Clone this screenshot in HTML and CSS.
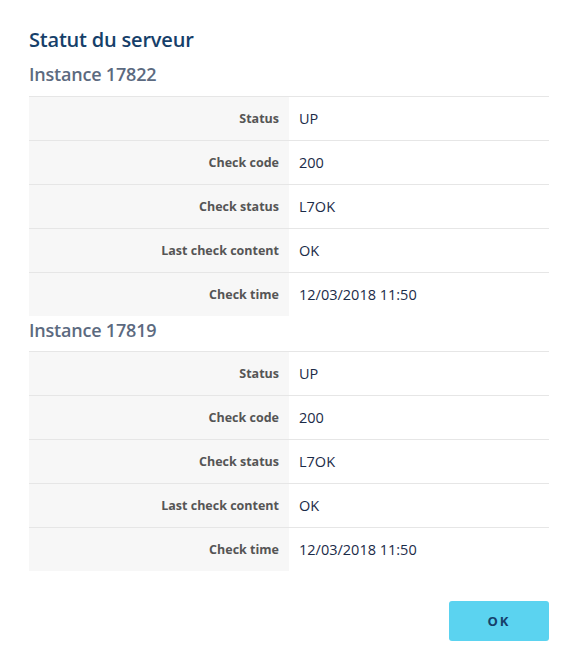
FILE: index.html
```html
<!DOCTYPE html>
<html lang="fr">
<head>
<meta charset="utf-8">
<link rel="stylesheet" href="styles.css">
</head>
<body>
<div class="dialog">
  <h1 class="title">Statut du serveur</h1>
  <section class="instance">
    <h2 class="instance-title">Instance 17822</h2>
    <table class="info">
      <tr><th>Status</th><td>UP</td></tr>
      <tr><th>Check code</th><td>200</td></tr>
      <tr><th>Check status</th><td>L7OK</td></tr>
      <tr><th>Last check content</th><td>OK</td></tr>
      <tr><th>Check time</th><td>12/03/2018 11:50</td></tr>
    </table>
  </section>
  <section class="instance">
    <h2 class="instance-title">Instance 17819</h2>
    <table class="info">
      <tr><th>Status</th><td>UP</td></tr>
      <tr><th>Check code</th><td>200</td></tr>
      <tr><th>Check status</th><td>L7OK</td></tr>
      <tr><th>Last check content</th><td>OK</td></tr>
      <tr><th>Check time</th><td>12/03/2018 11:50</td></tr>
    </table>
  </section>
  <div class="actions">
    <button class="btn-ok">OK</button>
  </div>
</div>
</body>
</html>
```
FILE: styles.css
```css
html, body {
  margin: 0;
  padding: 0;
  background: #fff;
}
.dialog {
  padding: 26px 29px 16px;
  font-family: "Open Sans", "Noto Sans", sans-serif;
}
.title {
  margin: 0;
  font-size: 20px;
  line-height: 28px;
  font-weight: 600;
  color: #163f6a;
  letter-spacing: -0.2px;
}
.instance-title {
  margin: 0;
  padding-top: 6px;
  font-size: 18px;
  line-height: 28px;
  font-weight: 600;
  color: #5c6a80;
  letter-spacing: -0.2px;
}
.instance + .instance .instance-title {
  padding-top: 1px;
  line-height: 26px;
}
.info {
  width: 100%;
  border-collapse: collapse;
  margin-top: 8px;
}
.info th, .info td {
  height: 43px;
  padding: 0 10px;
  border-top: 1px solid #e6e6e6;
  vertical-align: middle;
}
.info th {
  width: 240px;
  background: #f7f7f7;
  text-align: right;
  font-size: 12.5px;
  font-weight: 700;
  color: #555;
}
.info td {
  font-size: 14.5px;
  color: #1b2b48;
}
.actions {
  display: flex;
  justify-content: flex-end;
  margin-top: 30px;
}
.btn-ok {
  width: 100px;
  height: 40px;
  border: none;
  border-radius: 3px;
  background: #5bd3f0;
  color: #163f6a;
  font-family: "Open Sans", "Noto Sans", sans-serif;
  font-size: 13px;
  font-weight: 700;
  letter-spacing: 2px;
}
```
